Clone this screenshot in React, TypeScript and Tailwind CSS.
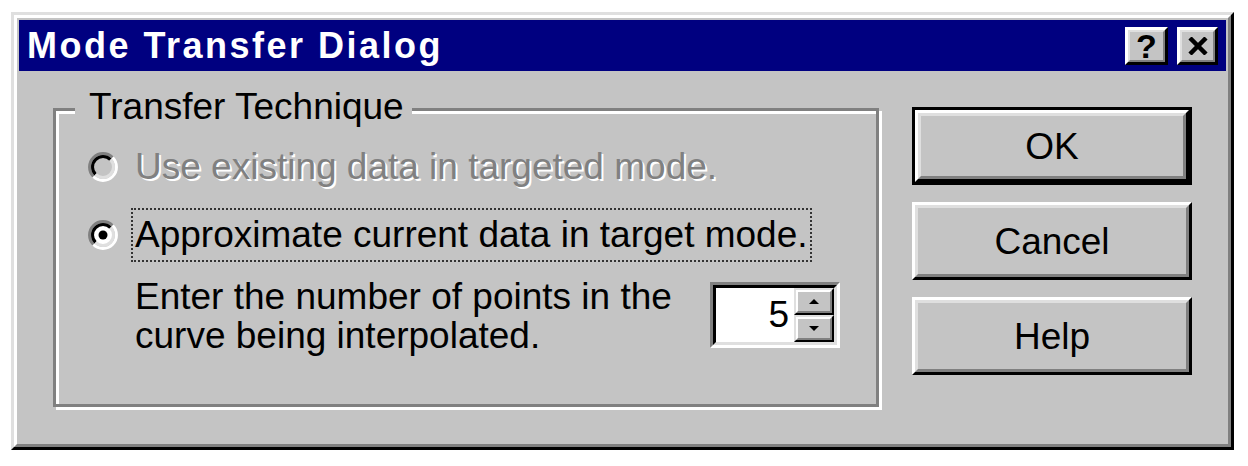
import React from 'react'

function Radio({ checked, disabled }: { checked?: boolean; disabled?: boolean }) {
  const c = 16
  const pt = (r: number) => {
    const d = r * 0.7071
    return { bl: `${c - d} ${c + d}`, tr: `${c + d} ${c - d}` }
  }
  const o = pt(13.5)
  const i = pt(10.5)
  return (
    <svg width="32" height="32" viewBox="0 0 32 32" className="shrink-0">
      <circle cx="16" cy="16" r="10" fill={disabled ? '#c4c4c4' : '#ffffff'} />
      <path d={`M${o.bl} A13.5 13.5 0 0 1 ${o.tr}`} stroke="#808080" strokeWidth="3" fill="none" />
      <path d={`M${o.tr} A13.5 13.5 0 0 1 ${o.bl}`} stroke="#ffffff" strokeWidth="3" fill="none" />
      <path d={`M${i.bl} A10.5 10.5 0 0 1 ${i.tr}`} stroke="#000000" strokeWidth="3" fill="none" />
      <path d={`M${i.tr} A10.5 10.5 0 0 1 ${i.bl}`} stroke="#dfdfdf" strokeWidth="3" fill="none" />
      {checked && <circle cx="16" cy="16" r="4.5" fill="#000" />}
    </svg>
  )
}

function CaptionButton({ children, w }: { children: React.ReactNode; w: string }) {
  return (
    <div className={`${w} h-[38px] border-[3px] border-t-white border-l-white border-b-black border-r-black`}>
      <div className="flex h-full items-center justify-center border-[2px] border-t-[#dfdfdf] border-l-[#dfdfdf] border-b-[#808080] border-r-[#808080] bg-[#c4c4c4]">
        {children}
      </div>
    </div>
  )
}

function SpinButton({ up }: { up?: boolean }) {
  return (
    <div className="h-[27px] border-[2px] border-t-[#dfdfdf] border-l-[#dfdfdf] border-b-black border-r-black">
      <div className="flex h-full items-center justify-center border-[2px] border-t-white border-l-white border-b-[#808080] border-r-[#808080] bg-[#c4c4c4]">
        <svg width="10" height="5" viewBox="0 0 10 5">
          {up ? <polygon points="5,0 10,5 0,5" fill="#000" /> : <polygon points="0,0 10,0 5,5" fill="#000" />}
        </svg>
      </div>
    </div>
  )
}

function PushButton({ label, isDefault }: { label: string; isDefault?: boolean }) {
  const bevel = (
    <div className="h-full border-[3px] border-t-white border-l-white border-b-black border-r-black">
      <div className="flex h-full items-center justify-center border-[3px] border-t-[#dfdfdf] border-l-[#dfdfdf] border-b-[#808080] border-r-[#808080] bg-[#c4c4c4] text-[37px] leading-none text-black">
        {label}
      </div>
    </div>
  )
  return (
    <div className={`h-[78px] w-[280px] ${isDefault ? 'border-[3px] border-black' : ''}`}>{bevel}</div>
  )
}

export default function App() {
  return (
    <div className="h-[466px] w-[1248px] bg-white pl-[11px] pt-[12px] font-['Liberation_Sans',Arial,sans-serif]">
      {/* Dialog frame */}
      <div className="h-[438px] w-[1223px] border-[3px] border-t-[#dfdfdf] border-l-[#dfdfdf] border-b-black border-r-black">
        <div className="flex h-full flex-col border-[3px] border-t-white border-l-white border-b-[#808080] border-r-[#808080] bg-[#c4c4c4] p-[2px]">
          {/* Title bar */}
          <div className="flex h-[51px] shrink-0 items-center justify-between bg-[#000080] pl-[8px] pr-[8px]">
            <span className="text-[36px] font-bold leading-none tracking-[2.5px] text-white">Mode Transfer Dialog</span>
            <div className="flex gap-[9px]">
              <CaptionButton w="w-[43px]">
                <span className="text-[34px] font-bold leading-none text-black">?</span>
              </CaptionButton>
              <CaptionButton w="w-[41px]">
                <svg width="20" height="18" viewBox="0 0 20 18">
                  <path d="M2 1 L18 17 M18 1 L2 17" stroke="#000" strokeWidth="4.5" />
                </svg>
              </CaptionButton>
            </div>
          </div>

          {/* Body */}
          <div className="flex flex-1 pl-[34px] pr-[34px]">
            {/* Group box */}
            <div className="relative mt-[37px] h-[299px] w-[826px] border-[3px] border-[#808080] pl-[31px] pt-[34px] text-[37px] text-black shadow-[3px_3px_0_0_#fff,inset_3px_3px_0_0_#fff]">
              <span className="absolute left-[19px] top-[-25px] bg-[#c4c4c4] pl-[14px] pr-[8px] leading-[42px]">
                Transfer Technique
              </span>

              <div className="flex h-[44px] items-center">
                <Radio disabled />
                <span className="ml-[16px] leading-[44px] text-[#808080] [text-shadow:2px_2px_0_#fff]">
                  Use existing data in targeted mode.
                </span>
              </div>

              <div className="mt-[19px] flex h-[54px] items-center">
                <Radio checked />
                <span className="ml-[12px] flex h-full items-center border-[2px] border-dotted border-[#333] px-[2px] leading-[44px]">
                  Approximate current data in target mode.
                </span>
              </div>

              <div className="mt-[15px] flex pl-[48px]">
                <p className="w-[575px] leading-[39px]">
                  Enter the number of points in the
                  <br />
                  curve being interpolated.
                </p>
                {/* Spinner */}
                <div className="mt-[5px] h-[66px] w-[130px] border-[3px] border-t-[#808080] border-l-[#808080] border-b-white border-r-white">
                  <div className="flex h-full border-[3px] border-t-black border-l-black border-b-[#dfdfdf] border-r-[#dfdfdf] bg-white">
                    <div className="flex flex-1 items-center justify-end pr-[5px] leading-[44px]">5</div>
                    <div className="flex w-[40px] flex-col">
                      <SpinButton up />
                      <SpinButton />
                    </div>
                  </div>
                </div>
              </div>
            </div>

            {/* Buttons */}
            <div className="ml-auto mt-[36px] flex flex-col gap-[17px]">
              <PushButton label="OK" isDefault />
              <PushButton label="Cancel" />
              <PushButton label="Help" />
            </div>
          </div>
        </div>
      </div>
    </div>
  )
}
